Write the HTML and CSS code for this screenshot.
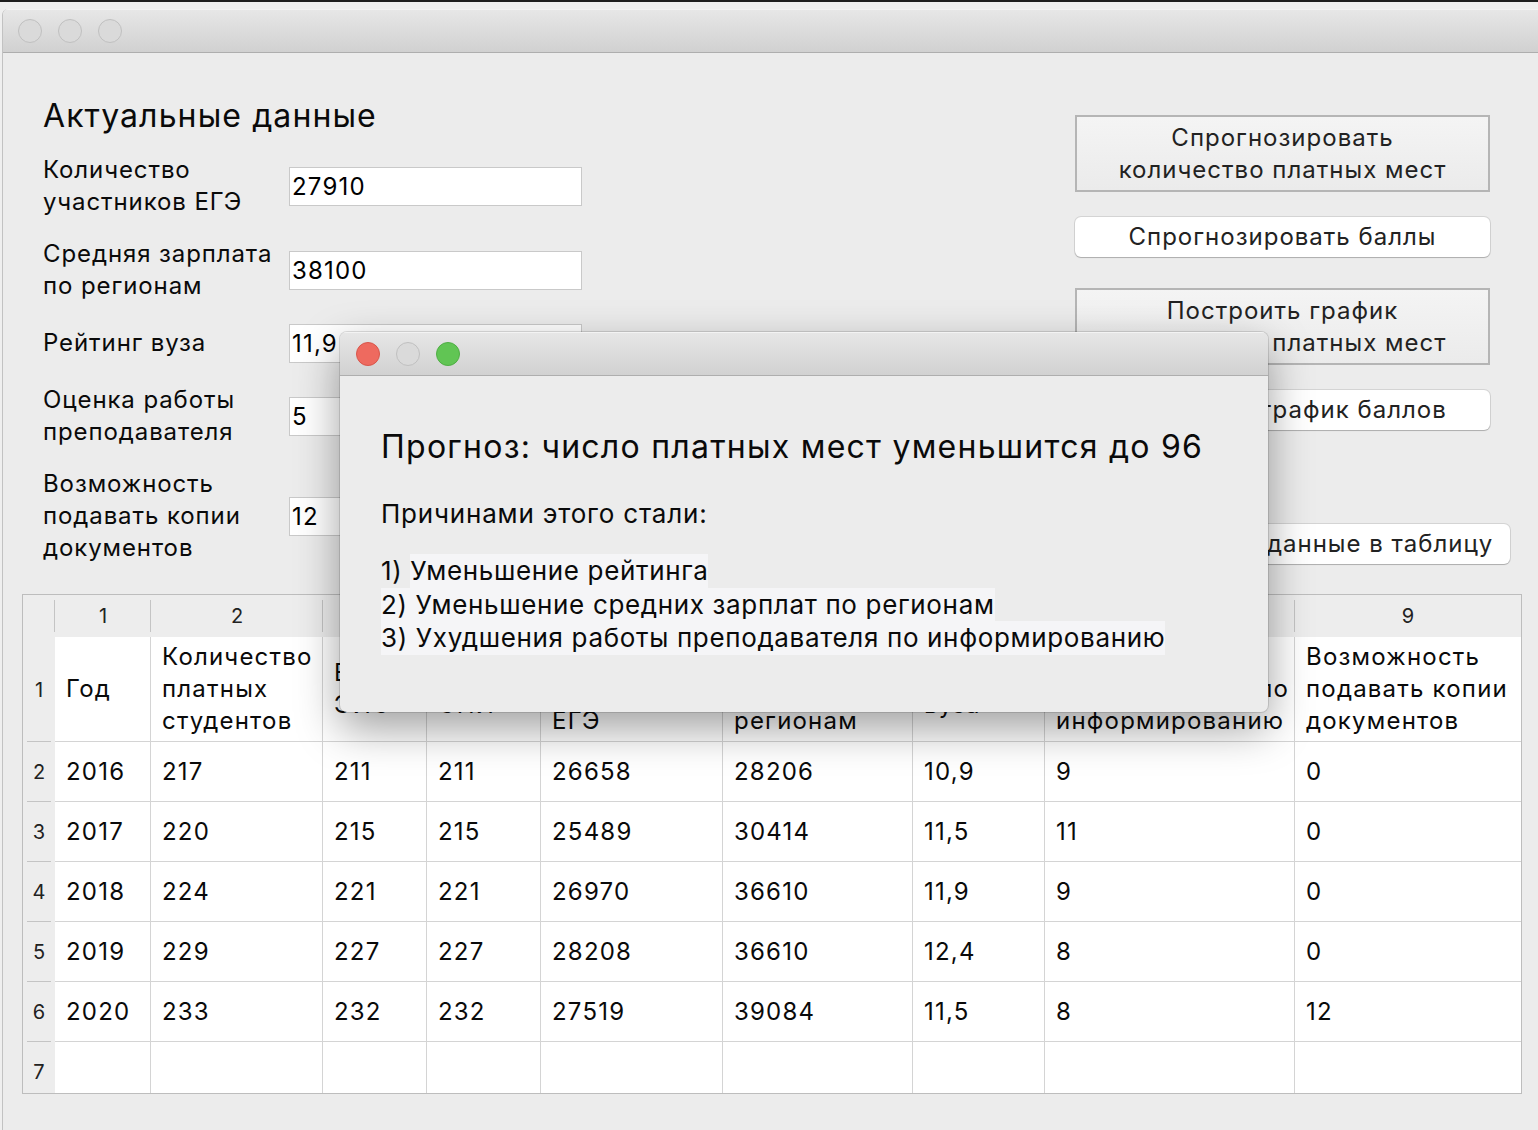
FILE: index.html
```html
<!DOCTYPE html>
<html lang="ru">
<head>
<meta charset="utf-8">
<title>Прогноз</title>
<link rel="stylesheet" href="styles.css">
</head>
<body>
<div class="window">
  <div class="titlebar">
    <span class="light"></span><span class="light"></span><span class="light"></span>
  </div>
  <div class="content">
    <div class="top">
      <section class="form">
        <h1 class="heading">Актуальные данные</h1>
        <div class="fields">
          <div class="lbl">Количество<br>участников ЕГЭ</div><div class="inp">27910</div>
          <div class="lbl">Средняя зарплата<br>по регионам</div><div class="inp">38100</div>
          <div class="lbl">Рейтинг вуза</div><div class="inp">11,9</div>
          <div class="lbl">Оценка работы<br>преподавателя</div><div class="inp">5</div>
          <div class="lbl">Возможность<br>подавать копии<br>документов</div><div class="inp">12</div>
        </div>
      </section>
      <div class="actions">
        <button class="btn flat">Спрогнозировать<br>количество платных мест</button>
        <button class="btn round b2">Спрогнозировать баллы</button>
        <button class="btn flat b3">Построить график<br>количество платных мест</button>
        <button class="btn round b4">Построить график баллов</button>
        <button class="btn round b5">Добавить данные в таблицу</button>
      </div>
    </div>
    <div class="grid-wrap">
    <table class="grid">
      <colgroup>
        <col class="w0"><col class="w1"><col class="w2"><col class="w3"><col class="w4"><col class="w5"><col class="w6"><col class="w7"><col class="w8"><col class="w9">
      </colgroup>
      <thead>
        <tr class="hrow">
          <th class="corner"></th><th>1</th><th>2</th><th>3</th><th>4</th><th>5</th><th>6</th><th>7</th><th>8</th><th class="last">9</th>
        </tr>
      </thead>
      <tbody>
        <tr class="r1">
          <th class="rh">1</th>
          <td>Год</td>
          <td>Количество<br>платных<br>студентов</td>
          <td>Баллы<br>ЭИО</td>
          <td>Баллы<br>СПИ</td>
          <td>Количество<br>участников<br>ЕГЭ</td>
          <td>Средняя<br>зарплата по<br>регионам</td>
          <td>Рейтинг<br>вуза</td>
          <td>Оценка работы<br>преподавателя по<br>информированию</td>
          <td class="last">Возможность<br>подавать копии<br>документов</td>
        </tr>
        <tr><th class="rh">2</th><td>2016</td><td>217</td><td>211</td><td>211</td><td>26658</td><td>28206</td><td>10,9</td><td>9</td><td class="last">0</td></tr>
        <tr><th class="rh">3</th><td>2017</td><td>220</td><td>215</td><td>215</td><td>25489</td><td>30414</td><td>11,5</td><td>11</td><td class="last">0</td></tr>
        <tr><th class="rh">4</th><td>2018</td><td>224</td><td>221</td><td>221</td><td>26970</td><td>36610</td><td>11,9</td><td>9</td><td class="last">0</td></tr>
        <tr><th class="rh">5</th><td>2019</td><td>229</td><td>227</td><td>227</td><td>28208</td><td>36610</td><td>12,4</td><td>8</td><td class="last">0</td></tr>
        <tr><th class="rh">6</th><td>2020</td><td>233</td><td>232</td><td>232</td><td>27519</td><td>39084</td><td>11,5</td><td>8</td><td class="last">12</td></tr>
        <tr class="r7"><th class="rh">7</th><td></td><td></td><td></td><td></td><td></td><td></td><td></td><td></td><td class="last"></td></tr>
      </tbody>
    </table>
    </div>
  </div>
</div>

<div class="dialog">
  <div class="titlebar dlg-bar">
    <span class="light red"></span><span class="light"></span><span class="light green"></span>
  </div>
  <div class="dlg-body">
    <div class="dlg-title">Прогноз: число платных мест уменьшится до 96</div>
    <div class="dlg-sub">Причинами этого стали:</div>
    <div class="reasons">
      <div class="reason">1) <span class="hl">Уменьшение рейтинга</span></div>
      <div class="reason"><span class="hl">2) Уменьшение средних зарплат по регионам</span></div>
      <div class="reason"><span class="hl">3) Ухудшения работы преподавателя по информированию</span></div>
    </div>
  </div>
</div>
</body>
</html>
```
FILE: styles.css
```css
* { box-sizing: border-box; }
html, body { margin: 0; padding: 0; }
body {
  width: 1538px;
  height: 1130px;
  overflow: hidden;
  position: relative;
  background: linear-gradient(#1e1e1e 0, #1e1e1e 2px, #efefef 2px);
  font-family: "Inter", "Noto Sans", sans-serif;
  color: #111;
}

.window {
  position: absolute;
  left: 2px;
  top: 9px;
  width: 1560px;
  height: 1140px;
  background: #ececec;
  border-left: 1px solid #c2c2c2;
  border-radius: 6px 0 0 0;
  overflow: hidden;
}

.titlebar {
  height: 44px;
  display: flex;
  align-items: center;
  gap: 16px;
  padding: 1px 0 0 15px;
  background: linear-gradient(#e7e7e7, #d1d1d1);
  border-bottom: 1px solid #aeaeae;
  box-shadow: inset 0 1px 0 #f3f3f3;
}
.light {
  width: 24px;
  height: 24px;
  border-radius: 50%;
  background: #dadada;
  border: 1px solid #c0c0c0;
}
.light.red { background: #ee6a5f; border-color: #d8564b; }
.light.green { background: #61c554; border-color: #4fae44; }

.content {
  padding: 43px 0 0 19px;
}
.top {
  display: flex;
  align-items: flex-start;
}
.form {
  width: 560px;
  padding-left: 21px;
}
.heading {
  margin: 0 0 18px;
  font-size: 32px;
  font-weight: 400;
  line-height: 40px;
  letter-spacing: 1.1px;
  color: #0a0a0a;
}
.fields {
  display: grid;
  grid-template-columns: 246px 293px;
  grid-template-rows: 64px 64px 42px 64px 96px;
  row-gap: 20px;
  align-items: center;
}
.lbl {
  font-size: 24px;
  line-height: 32px;
  letter-spacing: 0.9px;
  color: #0a0a0a;
}
.inp {
  height: 39px;
  background: #fff;
  border: 1px solid #c9c9c9;
  font-size: 24px;
  line-height: 37px;
  letter-spacing: 1.2px;
  padding-left: 2px;
  color: #000;
}

.actions {
  margin-left: 493px;
  margin-top: 19px;
  width: 435px;
  display: flex;
  flex-direction: column;
  align-items: flex-start;
}
.btn {
  font-family: inherit;
  font-size: 24px;
  line-height: 32px;
  letter-spacing: 1px;
  color: #222;
  width: 415px;
  padding: 0;
  text-align: center;
}
.btn.flat {
  height: 77px;
  border: 2px solid #b5b5b5;
  background: linear-gradient(#f4f4f4, #ebebeb);
}
.btn.round {
  height: 40px;
  border: none;
  border-radius: 6px;
  background: #fff;
  box-shadow: 0 0 0 1px rgba(0,0,0,0.10), 0 1px 1px rgba(0,0,0,0.18);
}
.b2 { margin-top: 25px; }
.b3 { margin-top: 31px; }
.b4 { margin-top: 25px; }
.b5 { margin-top: 94px; width: 390px; align-self: flex-end; }

.grid-wrap {
  margin-top: 30px;
  width: 1500px;
  height: 500px;
  overflow: hidden;
  border: 1px solid #bdbdbd;
  background: #fff;
}
.grid {
  width: 1498px;
  table-layout: fixed;
  border-collapse: separate;
  border-spacing: 0;
  font-size: 24px;
  line-height: 32px;
  color: #0a0a0a;
}
.w0 { width: 32px; }
.w1 { width: 96px; }
.w2 { width: 172px; }
.w3 { width: 104px; }
.w4 { width: 114px; }
.w5 { width: 182px; }
.w6 { width: 190px; }
.w7 { width: 132px; }
.w8 { width: 250px; }
.w9 { width: 226px; }

.hrow { height: 42px; }
.hrow th {
  position: relative;
  background: #ededed;
  font-weight: 400;
  font-size: 20px;
  color: #222;
  padding: 0;
  text-align: center;
  vertical-align: middle;
}
.hrow th::after {
  content: "";
  position: absolute;
  right: 0;
  top: 5px;
  bottom: 5px;
  width: 1px;
  background: #c4c4c4;
}
.hrow th.last::after { display: none; }

tbody tr { height: 60px; }
tbody tr.r1 { height: 105px; }

.rh {
  position: relative;
  background: #ededed;
  font-weight: 400;
  font-size: 20px;
  color: #222;
  text-align: center;
  padding: 0;
  vertical-align: middle;
}
.rh::after {
  content: "";
  position: absolute;
  left: 4px;
  right: 4px;
  bottom: 0;
  height: 1px;
  background: #c4c4c4;
}
td {
  padding: 0 0 0 11px;
  vertical-align: middle;
  letter-spacing: 1.2px;
  border-right: 1px solid #d4d4d4;
  border-bottom: 1px solid #d4d4d4;
  white-space: nowrap;
  overflow: hidden;
}
td.last { border-right: none; }

.dialog {
  position: absolute;
  left: 340px;
  top: 332px;
  width: 928px;
  height: 380px;
  background: #ececec;
  border-radius: 7px;
  overflow: hidden;
  box-shadow: 0 0 0 1px rgba(0,0,0,0.12), 0 16px 44px rgba(0,0,0,0.38);
}
.dlg-bar { padding-left: 16px; }
.dlg-body {
  padding: 51px 0 0 41px;
  color: #0a0a0a;
}
.dlg-title {
  font-size: 32px;
  line-height: 40px;
  letter-spacing: 1.25px;
}
.dlg-sub {
  margin-top: 30px;
  font-size: 26px;
  line-height: 34px;
  letter-spacing: 0.8px;
}
.reasons {
  margin-top: 23px;
  font-size: 26px;
  letter-spacing: 0.65px;
}
.reason {
  height: 33.6px;
  line-height: 33.6px;
}
.hl {
  display: inline-block;
  background: #f5f5f7;
}
```
